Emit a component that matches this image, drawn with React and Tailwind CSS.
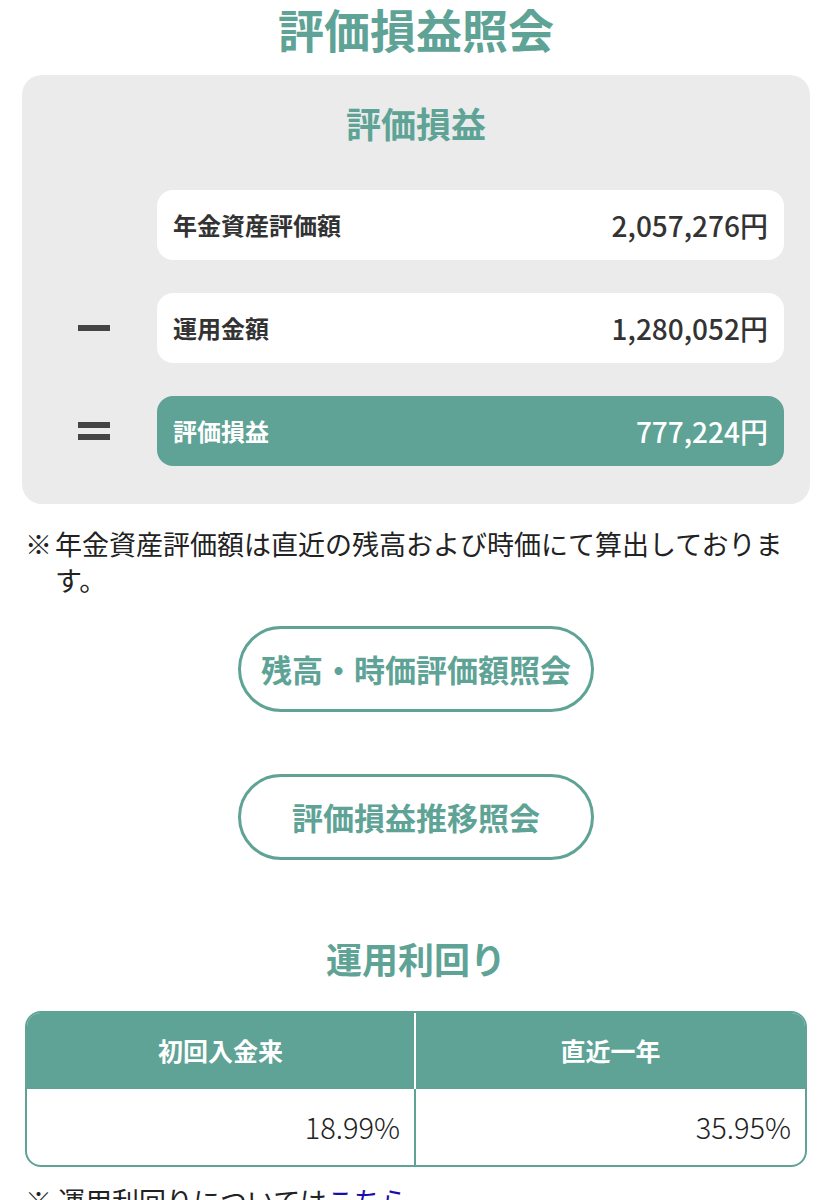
import React from "react";

const green = "text-[#5ea395]";

function Op({ kind }) {
  if (kind === "minus") return <div className="w-[32px] h-[6px] bg-[#444]" />;
  if (kind === "equals")
    return (
      <div className="flex flex-col gap-[6px]">
        <div className="w-[32px] h-[6px] bg-[#444]" />
        <div className="w-[32px] h-[6px] bg-[#444]" />
      </div>
    );
  return null;
}

function Row({ op, label, value, highlight }) {
  return (
    <div className="flex items-center">
      <div className="w-[135px] flex justify-center pl-[8px]">
        <Op kind={op} />
      </div>
      <div
        className={
          "flex-1 h-[70px] rounded-2xl flex items-center justify-between pl-4 pr-4 text-[24px] font-bold " +
          (highlight ? "bg-[#5ea395] text-white" : "bg-white text-[#333]")
        }
      >
        <span>{label}</span>
        <span className="text-[28px] font-medium">{value}</span>
      </div>
    </div>
  );
}

export default function App() {
  return (
    <div
      className="w-[832px] h-[1200px] overflow-hidden bg-white"
      style={{ fontFamily: '"Noto Sans CJK JP", "Noto Sans", sans-serif' }}
    >
      <h1 className={"text-center text-[46px] font-bold leading-[56px] " + green}>評価損益照会</h1>

      <div className="mx-[22px] mt-[19px] bg-[#ebebeb] rounded-[20px] pt-[28px] pb-[38px] pr-[26px]">
        <h2 className={"text-center text-[35px] font-bold leading-[40px] pl-[26px] " + green}>評価損益</h2>
        <div className="flex flex-col gap-[33px] mt-[47px]">
          <Row op="" label="年金資産評価額" value="2,057,276円" />
          <Row op="minus" label="運用金額" value="1,280,052円" />
          <Row op="equals" label="評価損益" value="777,224円" highlight />
        </div>
      </div>

      <div className="flex mx-[25px] mt-[22px] text-[27px] leading-[36px] text-[#222]">
        <span className="shrink-0 w-[30px]">※</span>
        <span>年金資産評価額は直近の残高および時価にて算出しております。</span>
      </div>

      <div className="flex flex-col items-center gap-[62px] mt-[28px]">
        <button className={"w-[356px] h-[86px] rounded-full border-[3px] border-[#5ea395] bg-white text-[31px] font-bold " + green}>
          残高・時価評価額照会
        </button>
        <button className={"w-[356px] h-[86px] rounded-full border-[3px] border-[#5ea395] bg-white text-[31px] font-bold " + green}>
          評価損益推移照会
        </button>
      </div>

      <h2 className={"text-center text-[36px] font-bold leading-[44px] mt-[76px] " + green}>運用利回り</h2>

      <div className="mx-[25px] mt-[31px] border-2 border-[#5ea395] rounded-2xl overflow-hidden">
        <div className="grid grid-cols-2 bg-[#5ea395] text-white text-[25px] font-bold h-[76px]">
          <div className="flex items-center justify-center border-r-2 border-white">初回入金来</div>
          <div className="flex items-center justify-center">直近一年</div>
        </div>
        <div className="grid grid-cols-2 text-[29px] font-light text-[#222] h-[76px]">
          <div className="flex items-center justify-end pr-[14px] border-r-2 border-[#5ea395]">18.99%</div>
          <div className="flex items-center justify-end pr-[14px]">35.95%</div>
        </div>
      </div>

      <p className="mx-[25px] mt-[16px] text-[27px] leading-[36px] text-[#222]">
        ※ 運用利回りについては<a className="text-[#1a0dab]">こちら</a>
      </p>
    </div>
  );
}
